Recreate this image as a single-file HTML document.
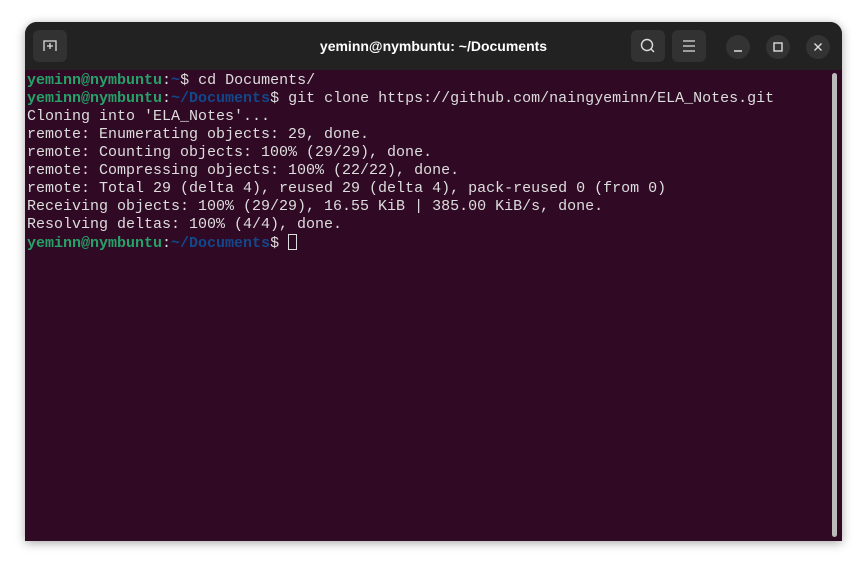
<!DOCTYPE html>
<html><head><style>
html,body{margin:0;padding:0;background:#fff;width:867px;height:569px;overflow:hidden}
.win{position:absolute;left:25px;top:22px;width:817px;height:519px;border-radius:12px 12px 0 0;overflow:hidden;background:#300a24;box-shadow:0 2px 10px rgba(0,0,0,.35)}
.hdr{position:absolute;left:0;top:0;width:817px;height:48px;background:#222222}
.title{position:absolute;left:0;right:0;top:16px;text-align:center;color:#fff;font:bold 14px "Liberation Sans",sans-serif}
.btn{position:absolute;top:8px;width:34px;height:32px;border-radius:6px;background:#323232}
.cb{position:absolute;top:13px;width:24px;height:24px;border-radius:50%;background:#333}
.term{position:absolute;left:2px;top:50px;font:15px/18px "Liberation Mono",monospace;color:#ddd;white-space:pre}
.g{color:#26a269;font-weight:bold}.b{color:#12488b;font-weight:bold}
.cur{display:inline-block;width:9px;height:16px;border:1px solid #ddd;box-sizing:border-box;vertical-align:-3px}
.sb{position:absolute;left:807px;top:51px;width:5px;height:464px;border-radius:3px;background:#bbb}
</style></head><body>
<div class="win">
<div class="hdr">
<div class="btn" style="left:8px"><svg width="34" height="32"><path d="M11 21V11h12v10" fill="none" stroke="#ddd" stroke-width="1.3"/><path d="M17 13v6M14 16h6" stroke="#ddd" stroke-width="1.3"/></svg></div>
<div class="title">yeminn@nymbuntu: ~/Documents</div>
<div class="btn" style="left:606px"><svg width="34" height="32"><circle cx="16" cy="15" r="5.5" fill="none" stroke="#ddd" stroke-width="1.4"/><path d="M20 19l3 3" stroke="#ddd" stroke-width="1.4"/></svg></div>
<div class="btn" style="left:647px"><svg width="34" height="32"><path d="M11 11h12M11 16h12M11 21h12" stroke="#ddd" stroke-width="1.2"/></svg></div>
<div class="cb" style="left:701px"><svg width="24" height="24"><path d="M8 16h8" stroke="#ddd" stroke-width="1.4"/></svg></div>
<div class="cb" style="left:741px"><svg width="24" height="24"><rect x="8" y="8" width="8" height="8" fill="none" stroke="#ddd" stroke-width="1.4"/></svg></div>
<div class="cb" style="left:781px"><svg width="24" height="24"><path d="M8.5 8.5l7 7M15.5 8.5l-7 7" stroke="#ddd" stroke-width="1.4"/></svg></div>
</div>
<div class="term"><span class="g">yeminn@nymbuntu</span>:<span class="b">~</span>$ cd Documents/
<span class="g">yeminn@nymbuntu</span>:<span class="b">~/Documents</span>$ git clone https://github.com/naingyeminn/ELA_Notes.git
Cloning into 'ELA_Notes'...
remote: Enumerating objects: 29, done.
remote: Counting objects: 100% (29/29), done.
remote: Compressing objects: 100% (22/22), done.
remote: Total 29 (delta 4), reused 29 (delta 4), pack-reused 0 (from 0)
Receiving objects: 100% (29/29), 16.55 KiB | 385.00 KiB/s, done.
Resolving deltas: 100% (4/4), done.
<span class="g">yeminn@nymbuntu</span>:<span class="b">~/Documents</span>$ <span class="cur"></span></div>
<div class="sb"></div>
</div>
</body></html>
